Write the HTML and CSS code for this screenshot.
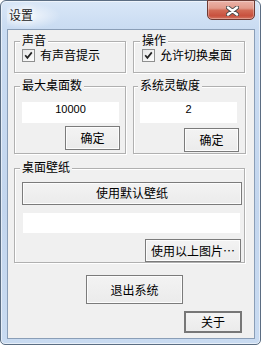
FILE: index.html
```html
<!DOCTYPE html>
<html lang="zh-CN">
<head>
<meta charset="utf-8">
<title>设置</title>
<link rel="stylesheet" href="styles.css">
</head>
<body>
<div class="window">
  <div class="titlebar">
    <span class="title">设置</span>
    <div class="close">
      <svg width="13" height="10" viewBox="0 0 13 10">
        <path d="M2 1.5 L11 8.5 M11 1.5 L2 8.5" stroke="#4b4b4b" stroke-width="4.2" stroke-linecap="round" fill="none"/>
        <path d="M2 1.5 L11 8.5 M11 1.5 L2 8.5" stroke="#ffffff" stroke-width="2.4" stroke-linecap="round" fill="none"/>
      </svg>
    </div>
  </div>
  <div class="client">
    <div class="row row-top">
      <div class="group g-small">
        <div class="group-title">声音</div>
        <label class="check"><span class="box"><svg width="11" height="11" viewBox="0 0 11 11"><path d="M2.2 5.2 L4.4 7.8 L8.8 2.4" stroke="#222" stroke-width="1.7" fill="none"/></svg></span>有声音提示</label>
      </div>
      <div class="group g-small g-right">
        <div class="group-title">操作</div>
        <label class="check"><span class="box"><svg width="11" height="11" viewBox="0 0 11 11"><path d="M2.2 5.2 L4.4 7.8 L8.8 2.4" stroke="#222" stroke-width="1.7" fill="none"/></svg></span>允许切换桌面</label>
      </div>
    </div>
    <div class="row row-mid">
      <div class="group g-num">
        <div class="group-title">最大桌面数</div>
        <div class="edit">10000</div>
        <div class="btn btn-ok">确定</div>
      </div>
      <div class="group g-num g-num-right">
        <div class="group-title">系统灵敏度</div>
        <div class="edit">2</div>
        <div class="btn btn-ok">确定</div>
      </div>
    </div>
    <div class="group g-wall">
      <div class="group-title">桌面壁纸</div>
      <div class="btn btn-wide">使用默认壁纸</div>
      <div class="edit edit-wide"></div>
      <div class="btn btn-pick">使用以上图片…</div>
    </div>
    <div class="btn btn-exit">退出系统</div>
    <div class="btn btn-about">关于</div>
  </div>
</div>
</body>
</html>
```
FILE: styles.css
```css
* { box-sizing: border-box; }
html, body { margin: 0; padding: 0; }
body {
  width: 261px;
  height: 345px;
  background: #ffffff;
  font-family: "Noto Sans CJK SC", "Noto Sans", sans-serif;
  font-size: 12px;
  line-height: 12px;
  color: #000;
}
.window {
  width: 261px;
  height: 345px;
  border: 1px solid #5b6d82;
  border-radius: 6px 6px 5px 5px;
  background: linear-gradient(180deg, #d9e7f7 0, #cadcf2 26px, #c3d6ee 60%, #c9dbf1 100%);
  box-shadow: inset 0 0 0 1px rgba(255,255,255,0.55);
  padding: 0 5px 5px 6px;
  display: flex;
  flex-direction: column;
}
.titlebar {
  height: 28px;
  display: flex;
  justify-content: space-between;
  align-items: flex-start;
  background: radial-gradient(ellipse 34px 13px at 20px 15px, rgba(255,255,255,0.75), rgba(255,255,255,0));
}
.title {
  margin-top: 8px;
  margin-left: 2px;
  color: #1a1a1a;
  text-shadow: 0 0 6px #fff, 0 0 8px #fff;
}
.close {
  width: 48px;
  height: 20px;
  margin-top: -1px;
  border: 1px solid #6d3a33;
  border-radius: 0 0 5px 5px;
  background: linear-gradient(180deg, #ebb3a8 0, #e29a8b 40%, #d26a55 52%, #c8513e 82%, #d47561 100%);
  box-shadow: inset 0 0 0 1px rgba(255,255,255,0.3);
  display: flex;
  align-items: center;
  justify-content: center;
  padding: 2px 0 0 3px;
}
.close svg { display: block; }
.client {
  flex: 1;
  background: #f0f0f0;
  border: 1px solid #8a9eb7;
  padding: 0 0 0 6px;
  display: flex;
  flex-direction: column;
  align-items: flex-start;
}
.row {
  display: flex;
  gap: 7px;
}
.row-top { margin-top: 11px; }
.row-mid { margin-top: 13px; }
.group {
  border: 1px solid #b0b0b0;
  box-shadow: inset 1px 1px 0 #fff, 1px 1px 0 #fff;
  display: flex;
  flex-direction: column;
  align-items: flex-start;
  padding: 0 0 0 7px;
}
.group-title {
  margin-top: -8px;
  margin-left: -2px;
  padding: 0 2px;
  height: 12px;
  line-height: 12px;
  background: #f0f0f0;
  white-space: nowrap;
}
.g-small {
  width: 112px;
  height: 32px;
}
.g-right { padding-left: 8px; }
.check {
  margin-top: 2px;
  height: 14px;
  display: flex;
  align-items: center;
  gap: 5px;
  white-space: nowrap;
}
.box {
  width: 13px;
  height: 13px;
  border: 1px solid #8e8f8f;
  background: linear-gradient(135deg, #e6e6e6, #fdfdfd);
  display: flex;
  align-items: center;
  justify-content: center;
}
.box svg { display: block; }
.g-num {
  width: 112px;
  height: 68px;
}
.g-num-right {
  width: 113px;
  padding-left: 6px;
}
.edit {
  background: #ffffff;
  font-family: "Liberation Sans", "Noto Sans CJK SC", sans-serif;
  font-size: 11px;
  line-height: 13px;
  text-align: center;
  padding-top: 1px;
}
.g-num .edit {
  margin-top: 11px;
  width: 97px;
  height: 21px;
}
.btn {
  display: flex;
  align-items: center;
  justify-content: center;
  border: 1px solid #7b7b7b;
  background: linear-gradient(180deg, #f3f3f3, #ebebeb);
  box-shadow: inset 0 0 0 1px #fcfcfc;
  white-space: nowrap;
}
.btn-ok {
  align-self: flex-end;
  width: 55px;
  height: 24px;
  margin-top: 3px;
  margin-right: 5px;
}
.g-num-right .btn-ok {
  margin-top: 5px;
  margin-right: 6px;
}
.g-wall {
  margin-top: 14px;
  width: 231px;
  height: 95px;
}
.btn-wide {
  margin-top: 9px;
  width: 220px;
  height: 23px;
}
.edit-wide {
  margin-top: 8px;
  margin-left: 1px;
  width: 217px;
  height: 21px;
}
.btn-pick {
  align-self: flex-end;
  margin-top: 6px;
  margin-right: 3px;
  width: 96px;
  height: 23px;
}
.btn-exit {
  margin-top: 12px;
  margin-left: 72px;
  width: 97px;
  height: 29px;
}
.btn-about {
  margin-top: 7px;
  margin-left: 170px;
  width: 58px;
  height: 22px;
  border: 2px solid #777777;
  box-shadow: none;
}
```
